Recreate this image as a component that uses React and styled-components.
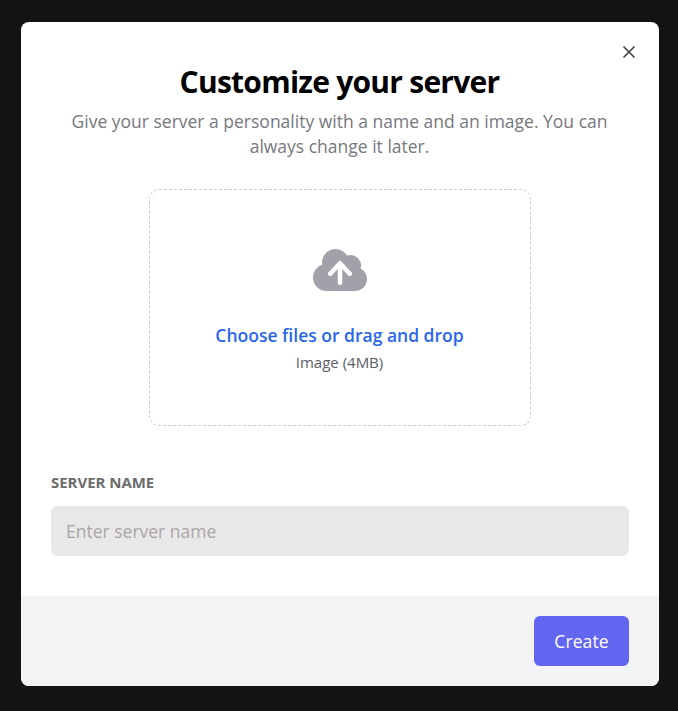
import React from "react";
import styled, { createGlobalStyle } from "styled-components";

const GlobalStyle = createGlobalStyle`
  *, *::before, *::after { box-sizing: border-box; }
  body { margin: 0; background: #141213; font-family: "Open Sans", sans-serif; }
`;

const Overlay = styled.main`
  height: 711px;
  padding: 22px 19px 25px 21px;
  background: #141213;
`;

const Dialog = styled.section`
  position: relative;
  display: flex;
  flex-direction: column;
  height: 664px;
  background: #fff;
  border-radius: 8px;
  overflow: hidden;
`;

const CloseButton = styled.button`
  position: absolute;
  top: 20px;
  right: 20px;
  width: 20px;
  height: 20px;
  padding: 0;
  border: 0;
  background: none;
  color: #434243;
  svg { display: block; }
`;

const Header = styled.header`
  padding: 40px 31px 0 30px;
  text-align: center;
`;

const Title = styled.h1`
  margin: 0;
  font-size: 30px;
  line-height: 40px;
  font-weight: 700;
  letter-spacing: -0.75px;
  color: #000;
`;

const Description = styled.p`
  margin: 7px 0 0;
  font-size: 17.5px;
  line-height: 25px;
  color: #777780;
`;

const Body = styled.div`
  flex: 1;
  display: flex;
  flex-direction: column;
  padding: 30px 30px 0;
`;

const Dropzone = styled.div`
  align-self: center;
  display: flex;
  flex-direction: column;
  align-items: center;
  width: 382px;
  height: 237px;
  padding-top: 50px;
  border: 1px dashed #cbcbcc;
  border-radius: 10px;
  svg { display: block; }
`;

const UploadLabel = styled.label`
  margin-top: 20px;
  padding-right: 1px;
  font-size: 17.5px;
  line-height: 30px;
  font-weight: 600;
  color: #2866ec;
`;

const FileHint = styled.span`
  padding-right: 1px;
  font-size: 15px;
  line-height: 25px;
  color: #5d5d65;
`;

const FieldLabel = styled.label`
  margin-top: 46px;
  font-size: 15px;
  line-height: 20px;
  font-weight: 700;
  letter-spacing: -0.04px;
  text-transform: uppercase;
  color: #6d6c6d;
`;

const TextInput = styled.input`
  width: 100%;
  height: 50px;
  margin-top: 14px;
  padding: 0 15px;
  border: 0;
  border-radius: 6px;
  background: #e8e8ea;
  font: 17.5px "Open Sans", sans-serif;
  &::placeholder { color: #aca6a2; opacity: 1; }
`;

const Footer = styled.footer`
  display: flex;
  justify-content: flex-end;
  align-items: flex-start;
  height: 90px;
  padding: 20px 30px;
  background: #f3f4f6;
`;

const PrimaryButton = styled.button`
  width: 95px;
  height: 50px;
  padding: 0;
  border: 0;
  border-radius: 6px;
  background: #6366f1;
  color: #fff;
  font: 500 17.5px "Open Sans", sans-serif;
  letter-spacing: 0.1px;
`;

export default function App() {
  return (
    <Overlay>
      <GlobalStyle />
      <Dialog role="dialog" aria-labelledby="dialog-title">
        <CloseButton aria-label="Close">
          <svg width="20" height="20" viewBox="0 0 24 24" fill="none" stroke="currentColor" strokeWidth="2" strokeLinecap="round">
            <path d="M18 6 6 18M6 6l12 12" />
          </svg>
        </CloseButton>
        <Header>
          <Title id="dialog-title">Customize your server</Title>
          <Description>
            Give your server a personality with a name and an image. You can always change it later.
          </Description>
        </Header>
        <Body>
          <Dropzone>
            <svg width="60" height="60" viewBox="0 0 20 20" fill="#a1a1aa">
              <path fillRule="evenodd" clipRule="evenodd" d="M5.5 17a4.5 4.5 0 0 1-1.44-8.765 4.5 4.5 0 0 1 8.302-3.046 3.5 3.5 0 0 1 4.504 4.272A4 4 0 0 1 15 17H5.5Zm3.75-2.75a.75.75 0 0 0 1.5 0V9.66l1.95 2.1a.75.75 0 1 0 1.1-1.02l-3.25-3.5a.75.75 0 0 0-1.1 0l-3.25 3.5a.75.75 0 1 0 1.1 1.02l1.95-2.1v4.59Z" />
            </svg>
            <UploadLabel>Choose files or drag and drop</UploadLabel>
            <FileHint>Image (4MB)</FileHint>
          </Dropzone>
          <FieldLabel htmlFor="server-name">Server name</FieldLabel>
          <TextInput id="server-name" placeholder="Enter server name" />
        </Body>
        <Footer>
          <PrimaryButton>Create</PrimaryButton>
        </Footer>
      </Dialog>
    </Overlay>
  );
}
